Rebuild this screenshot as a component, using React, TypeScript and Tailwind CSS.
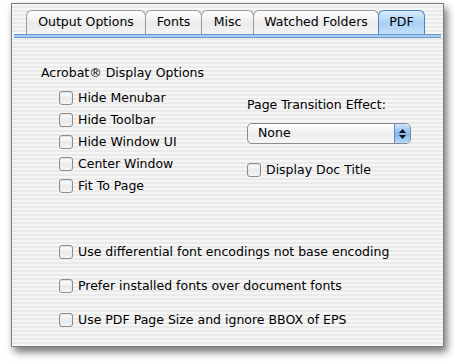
const tabs = [
  { label: 'Output Options', width: 'w-[120px]' },
  { label: 'Fonts', width: 'w-[57px]' },
  { label: 'Misc', width: 'w-[53px]' },
  { label: 'Watched Folders', width: 'w-[126px]' },
  { label: 'PDF', width: 'w-[47px]', active: true },
];

const displayOptions = ['Hide Menubar', 'Hide Toolbar', 'Hide Window UI', 'Center Window', 'Fit To Page'];

const fontOptions = [
  'Use differential font encodings not base encoding',
  'Prefer installed fonts over document fonts',
  'Use PDF Page Size and ignore BBOX of EPS',
];

function Checkbox({ label }: Readonly<{ label: string }>): JSX.Element {
  return (
    <label className="flex h-[22px] items-center gap-[5px]">
      <span className="h-[14px] w-[14px] shrink-0 rounded-[3px] border border-[#8c8c8c] bg-[linear-gradient(#ffffff,#e9e9e9_60%,#f6f6f6)] shadow-[inset_0_1px_1px_rgba(0,0,0,0.12)]" />
      <span className="text-[12.5px] text-black">{label}</span>
    </label>
  );
}

function Tab({ label, width, active }: Readonly<{ label: string; width: string; active?: boolean }>): JSX.Element {
  return (
    <div
      className={
        active
          ? `${width} -ml-px flex h-[24px] items-center justify-center rounded-t-[6px] border border-b-0 border-[#4f82c4] bg-[linear-gradient(#d9ecfc,#a9d0f5_55%,#c3e0fb)] text-[12.5px] text-black`
          : `${width} -ml-px flex h-[24px] items-center justify-center rounded-t-[6px] border border-b-0 border-[#9a9a9a] bg-[linear-gradient(#ffffff,#ebebeb_55%,#f3f3f3)] text-[12.5px] text-black`
      }
    >
      {label}
    </div>
  );
}

export default function App(): JSX.Element {
  return (
    <div className="h-[362px] w-[455px] bg-white pl-[11px] pt-[3px] font-['DejaVu_Sans',sans-serif]">
      <div className="flex h-[344px] w-[433px] flex-col border border-[#7d7d7d] bg-[repeating-linear-gradient(#f6f6f6_0px,#f6f6f6_2px,#eaeaea_2px,#eaeaea_4px)] shadow-[3px_5px_8px_rgba(0,0,0,0.55)]">
        <div className="flex pl-[15px] pt-[6px]">
          {tabs.map((tab) => (
            <Tab key={tab.label} label={tab.label} width={tab.width} active={tab.active} />
          ))}
        </div>
        <div className="mx-[2px] h-[4px] border-y border-[#6b96cc] bg-[#a7cdf3]" />

        <div className="pl-[29px] pt-[27px]">
          <p className="text-[12.5px] leading-[16px] text-black">Acrobat® Display Options</p>
          <div className="mt-[6px] flex">
            <div className="flex w-[206px] flex-col pl-[18px]">
              {displayOptions.map((option) => (
                <Checkbox key={option} label={option} />
              ))}
            </div>
            <div className="pt-[10px]">
              <p className="text-[12.5px] leading-[16px] text-black">Page Transition Effect:</p>
              <div className="mt-[10px] flex h-[21px] w-[164px] items-center overflow-hidden rounded-[5px] border border-[#8a8a8a] bg-[linear-gradient(#ffffff,#ececec_55%,#f7f7f7)]">
                <span className="flex-1 pl-[10px] text-[12.5px] text-black">None</span>
                <span className="flex h-full w-[16px] flex-col items-center justify-center gap-[2px] border-l border-[#6b8fc4] bg-[linear-gradient(#cfe5fb,#7fb6ee_55%,#b5d8fb)]">
                  <svg width="7" height="4" viewBox="0 0 7 4"><path d="M3.5 0L7 4H0z" fill="#111" /></svg>
                  <svg width="7" height="4" viewBox="0 0 7 4"><path d="M0 0h7L3.5 4z" fill="#111" /></svg>
                </span>
              </div>
              <div className="mt-[15px]">
                <Checkbox label="Display Doc Title" />
              </div>
            </div>
          </div>

          <div className="mt-[44px] flex flex-col gap-[12px] pl-[18px]">
            {fontOptions.map((option) => (
              <Checkbox key={option} label={option} />
            ))}
          </div>
        </div>
      </div>
    </div>
  );
}
